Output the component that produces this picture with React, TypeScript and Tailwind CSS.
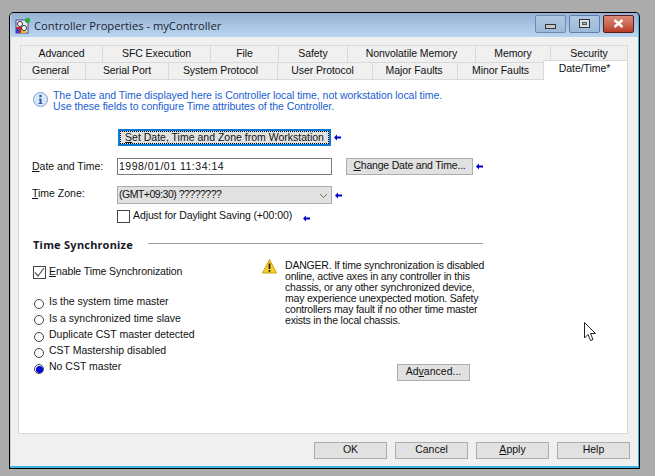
import React from "react";

function Arrow({ className = "" }: { className?: string }) {
  return (
    <svg width="7" height="7" viewBox="0 0 7 7" className={className}>
      <path d="M0 3.5 L3 0.5 V2.5 H7 V4.5 H3 V6.5 Z" fill="#0000c8" />
    </svg>
  );
}

function Btn({ w, children, cls = "" }: { w: string; children: React.ReactNode; cls?: string }) {
  return (
    <div className={`${w} ${cls} h-[17px] shrink-0 border border-[#adadad] bg-[#e1e1e1] flex items-center justify-center leading-none pb-[2px] whitespace-nowrap`}>
      {children}
    </div>
  );
}

function Tab({ w, label, cls = "" }: { w: string; label: string; cls?: string }) {
  return (
    <div className={`${w} ${cls} h-[17px] shrink-0 -ml-px first:ml-0 border border-b-0 border-[#d9d9d9] bg-[#f0f0f0] flex items-center justify-center tracking-[-0.08px] text-[#111]`}>
      {label}
    </div>
  );
}

function Radio({ label, on }: { label: string; on?: boolean }) {
  return (
    <div className="h-[16.25px] flex items-center gap-[5px]">
      <div className="w-[10px] h-[10px] ml-[1px] mt-[2px] rounded-full border border-[#444] bg-white flex items-center justify-center shrink-0">
        {on && <div className="w-[7px] h-[7px] rounded-full bg-[#0000e0]" />}
      </div>
      <span className="pb-[2px]">{label}</span>
    </div>
  );
}

function WinBtn({ cls, children }: { cls: string; children: React.ReactNode }) {
  return (
    <div className={`${cls} w-[31px] h-[18px] rounded-[2px] flex items-center justify-center`}>{children}</div>
  );
}

export default function App() {
  return (
    <div className="relative w-[655px] h-[476px] bg-[#ababab] pt-[12px] pl-[9px] overflow-hidden font-['Liberation_Sans',sans-serif] text-[10.5px] text-[#111]">
      <div className="w-[631px] h-[457px] bg-black p-px rounded-t-[5px]">
        <div className="h-full flex flex-col rounded-t-[4px] overflow-hidden bg-[#3cb4dc] pr-px pb-px">
          <div className="flex-1 flex flex-col border-l border-[#c3d8ec] border-b border-b-[#3cb4dc] min-h-0">
            {/* Title bar */}
            <div className="h-[24px] shrink-0 bg-gradient-to-b from-[#95b2d3] to-[#bad5ef] flex items-center pl-[4px] pr-[4px]">
              <svg width="16" height="17" viewBox="0 0 16 17" className="mt-[1px]">
                <rect x="1" y="3" width="12" height="13" fill="#ece9f5" stroke="#5a3fa0" />
                <rect x="1" y="10" width="6" height="6" fill="#d02030" />
                <rect x="10" y="1" width="5" height="5" rx="2" fill="#20b030" />
                <rect x="6" y="13" width="5" height="3" fill="#e0c020" />
                <rect x="1" y="12" width="3" height="4" fill="#2040e0" />
                <circle cx="5" cy="7" r="2.5" fill="#fff" stroke="#333" />
                <circle cx="9" cy="11" r="2.5" fill="#fff" stroke="#333" />
              </svg>
              <span className="ml-[3px] mt-[2px] font-['Open_Sans',sans-serif] text-[11.2px] text-[#1c2230]">Controller Properties - myController</span>
              <div className="ml-auto flex gap-[3px] mt-[-3px]">
                <WinBtn cls="border border-[#6f8bb0] bg-gradient-to-b from-[#b0c8e2] to-[#9db9d8]">
                  <div className="w-[11px] h-[5px] mt-[5px] bg-[#c4c8cc] border border-[#333]" />
                </WinBtn>
                <WinBtn cls="border border-[#5f7ea8] bg-gradient-to-b from-[#b0c8e2] to-[#9db9d8]">
                  <div className="w-[11px] h-[9px] bg-[#d8e0e8] border border-[#333] flex items-center justify-center"><div className="w-[5px] h-[3px] bg-[#aac0d8] border border-[#555]" /></div>
                </WinBtn>
                <WinBtn cls="border border-[#5a1a20] bg-gradient-to-b from-[#d98a78] via-[#c96a55] to-[#b83a28]">
                  <svg width="11" height="9" viewBox="0 0 11 9"><path d="M1.5 1 L9.5 8 M9.5 1 L1.5 8" stroke="#fff" strokeWidth="2.4" /></svg>
                </WinBtn>
              </div>
            </div>

            {/* Client */}
            <div className="flex-1 min-h-0 bg-[#f0f0f0] pt-[8px] flex flex-col">
              <div className="ml-[9px] flex">
                <Tab w="w-[83px]" label="Advanced" />
                <Tab w="w-[109px]" label="SFC Execution" />
                <Tab w="w-[69px]" label="File" />
                <Tab w="w-[70px]" label="Safety" />
                <Tab w="w-[129px]" label="Nonvolatile Memory" />
                <Tab w="w-[76px]" label="Memory" />
                <Tab w="w-[78px]" label="Security" />
              </div>
              <div className="ml-[9px] h-[17px] flex items-start relative z-10">
                <Tab w="w-[66px]" label="General" cls="pr-[5px]" />
                <Tab w="w-[84px]" label="Serial Port" />
                <Tab w="w-[110px]" label="System Protocol" cls="pr-[5px]" />
                <Tab w="w-[96px]" label="User Protocol" cls="pr-[5px]" />
                <Tab w="w-[86px]" label="Major Faults" cls="pr-[2px]" />
                <Tab w="w-[87px]" label="Minor Faults" />
                <div className="-ml-px w-[85px] h-[20px] -mt-[2px] shrink-0 border border-b-0 border-[#d9d9d9] bg-white flex justify-center tracking-[-0.08px] pr-[2px]">Date/Time*</div>
              </div>

              {/* Panel */}
              <div className="ml-[7px] w-[610px] h-[355px] shrink-0 border border-[#d9d9d9] bg-white flex flex-col">
                <div className="mt-[10px] ml-[14px] flex gap-[5px] h-[22px]">
                  <svg width="15" height="15" viewBox="0 0 15 15" className="mt-[2px] shrink-0">
                    <circle cx="7.5" cy="7.5" r="7" fill="#dbe8f8" stroke="#7f9dd0" />
                    <circle cx="7.5" cy="4" r="1.3" fill="#2a5cb0" />
                    <path d="M6 6.5 H8.5 V11 H9.5 V12 H5.5 V11 H6.5 V7.5 H6 Z" fill="#2a5cb0" />
                  </svg>
                  <div className="text-[#2160cf] leading-[11px] tracking-[-0.05px] whitespace-nowrap">
                    The Date and Time displayed here is Controller local time, not workstation local time.<br />
                    Use these fields to configure Time attributes of the Controller.
                  </div>
                </div>

                <div className="mt-[17px] ml-[99px] flex items-center">
                  <div className="w-[213px] h-[17px] border-2 border-[#0a78d7] bg-[#e1e1e1] shrink-0">
                    <div className="h-full border border-dotted border-black flex items-center justify-center leading-none pb-px whitespace-nowrap">
                      <span><u>S</u>et Date, Time and Zone from Workstation</span>
                    </div>
                  </div>
                  <Arrow className="ml-[3px]" />
                </div>

                <div className="mt-[12px] ml-[13px] flex items-center h-[17px]">
                  <div className="w-[85px] shrink-0"><u>D</u>ate and Time:</div>
                  <div className="w-[215px] h-[17px] shrink-0 border border-[#7a7a7a] flex items-center pl-[1px] tracking-[0.5px]">1998/01/01 11:34:14</div>
                  <Btn w="w-[127px]" cls="ml-[14px]"><span className="tracking-[-0.2px]"><u>C</u>hange Date and Time...</span></Btn>
                  <Arrow className="ml-[3px]" />
                </div>

                <div className="mt-[11px] ml-[13px] flex items-center h-[18px]">
                  <div className="w-[85px] shrink-0 pb-[3px]"><u>T</u>ime Zone:</div>
                  <div className="w-[215px] h-[18px] shrink-0 border border-[#adadad] bg-[#e1e1e1] flex items-center pl-[1px] tracking-[-0.5px]">
                    <span>(GMT+09:30) ????????</span>
                    <svg width="9" height="6" viewBox="0 0 9 6" className="ml-auto mr-[3px] mt-[2px]"><path d="M1 1 L4.5 4.5 L8 1" fill="none" stroke="#707070" /></svg>
                  </div>
                  <Arrow className="ml-[3px]" />
                </div>

                <div className="mt-[6px] ml-[98px] flex items-center h-[13px]">
                  <div className="w-[13px] h-[13px] border border-[#444] shrink-0" />
                  <span className="ml-[3px] tracking-[-0.1px] pb-[2px]">Adjust for Daylight Saving (+00:00)</span>
                  <Arrow className="ml-[11px] mt-[3px]" />
                </div>

                <div className="mt-[14px] ml-[14px] flex items-start h-[14px]">
                  <span className="w-[115px] shrink-0 font-['Noto_Sans',sans-serif] font-bold text-[11px] leading-[16px] tracking-[0.25px] text-[#1a1a2a]">Time Synchronize</span>
                  <div className="w-[335px] h-px mt-[6px] bg-[#a0a0a0]" />
                </div>

                <div className="flex">
                  <div className="ml-[14px] w-[229px] shrink-0">
                    <div className="mt-[15px] flex items-center h-[13px]">
                      <div className="w-[13px] h-[13px] border border-[#444] flex items-center justify-center shrink-0">
                        <svg width="11" height="11" viewBox="0 0 11 11"><path d="M1 5.5 L4 9 L10 1" fill="none" stroke="#555" strokeWidth="1.2" /></svg>
                      </div>
                      <span className="ml-[3px] tracking-[-0.1px] pb-[2px]"><u>E</u>nable Time Synchronization</span>
                    </div>
                    <div className="mt-[16px] flex flex-col">
                      <Radio label="Is the system time master" />
                      <Radio label="Is a synchronized time slave" />
                      <Radio label="Duplicate CST master detected" />
                      <Radio label="CST Mastership disabled" />
                      <Radio label="No CST master" on />
                    </div>
                  </div>
                  <div className="flex-1">
                    <div className="mt-[8px] flex gap-[8px]">
                      <svg width="15" height="15" viewBox="0 0 15 15" className="shrink-0">
                        <path d="M7.5 0.5 L14.5 14 H0.5 Z" fill="#f6d028" stroke="#c8a010" strokeLinejoin="round" />
                        <rect x="6.6" y="4.5" width="1.8" height="5.5" fill="#222" />
                        <rect x="6.6" y="11" width="1.8" height="1.8" fill="#222" />
                      </svg>
                      <div className="leading-[11px] mt-[1px] tracking-[-0.2px] whitespace-nowrap">
                        DANGER. If time synchronization is disabled<br />
                        online, active axes in any controller in this<br />
                        chassis, or any other synchronized device,<br />
                        may experience unexpected motion. Safety<br />
                        controllers may fault if no other time master<br />
                        exists in the local chassis.
                      </div>
                    </div>
                    <div className="mt-[38px] ml-[135px]">
                      <Btn w="w-[73px]"><span>Ad<u>v</u>anced...</span></Btn>
                    </div>
                  </div>
                </div>
              </div>

              {/* Footer */}
              <div className="mt-[8px] mr-[8px] flex justify-end gap-[8px]">
                <Btn w="w-[73px]">OK</Btn>
                <Btn w="w-[73px]">Cancel</Btn>
                <Btn w="w-[73px]"><span><u>A</u>pply</span></Btn>
                <Btn w="w-[73px]">Help</Btn>
              </div>
            </div>
          </div>
        </div>
      </div>

      {/* Mouse cursor */}
      <svg width="13" height="20" viewBox="0 0 13 20" className="absolute left-[584px] top-[322px]">
        <path d="M0.5 0.5 V16 L4 12.5 L6.5 18.5 L9 17.5 L6.5 11.5 H11.5 Z" fill="#fff" stroke="#222" strokeWidth="1" />
      </svg>
    </div>
  );
}
